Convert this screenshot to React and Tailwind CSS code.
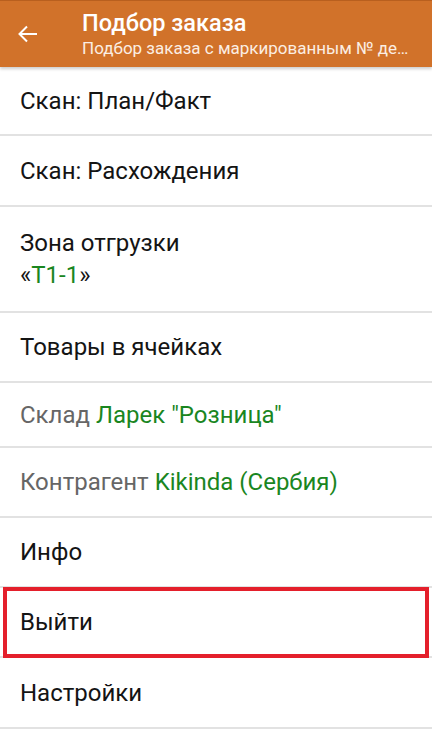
import React from 'react';

const font = { fontFamily: 'Roboto, "Noto Sans", sans-serif' };

const Row = ({ h, children, className = '' }) => (
  <div className={`flex flex-col justify-center px-5 border-b-2 border-[#e2e2e2] ${h} ${className}`}>
    {children}
  </div>
);

export default function App() {
  return (
    <div className="w-[432px] h-[739px] bg-white overflow-hidden" style={font}>
      <header className="relative z-10 h-[67px] bg-[#d1722a] border-t border-[#b85f1e] flex items-center shadow-[0_2px_3px_rgba(0,0,0,0.2)]">
        <div className="w-[82px] pl-4">
          <svg width="24" height="24" viewBox="0 0 24 24" fill="none" stroke="white" strokeWidth="2">
            <path d="M21 12H4M11 4.5L3.5 12l7.5 7.5" />
          </svg>
        </div>
        <div className="flex-1 min-w-0 pr-3 text-white">
          <div className="text-[23.5px] leading-[29px] font-medium">Подбор заказа</div>
          <div className="text-[17px] leading-[21px] truncate text-[#fbeee3]">
            Подбор заказа с маркированным № демонстрационный
          </div>
        </div>
      </header>

      <div className="text-[24px] text-[#141414]">
        <Row h="h-[69px]">Скан: План/Факт</Row>
        <Row h="h-[71px]">Скан: Расхождения</Row>
        <Row h="h-[106px]">
          <div className="leading-[32px]">Зона отгрузки</div>
          <div className="leading-[32px]">
            «<span className="text-[#1a861f]">Т1-1</span>»
          </div>
        </Row>
        <Row h="h-[70px]">Товары в ячейках</Row>
        <Row h="h-[65px]">
          <div>
            <span className="text-[#666666]">Склад </span>
            <span className="text-[#1a861f]">Ларек "Розница"</span>
          </div>
        </Row>
        <Row h="h-[70px]">
          <div>
            <span className="text-[#666666]">Контрагент </span>
            <span className="text-[#1a861f]">Kikinda (Сербия)</span>
          </div>
        </Row>
        <Row h="h-[70px]">Инфо</Row>
        <div className="relative h-[70px] border-b-2 border-[#e2e2e2] flex items-center px-5">
          Выйти
          <div className="absolute left-[3px] right-[3px] top-[-1px] bottom-[-2px] border-4 border-[#e41f2b]" />
        </div>
        <Row h="h-[71px]">Настройки</Row>
      </div>
    </div>
  );
}
